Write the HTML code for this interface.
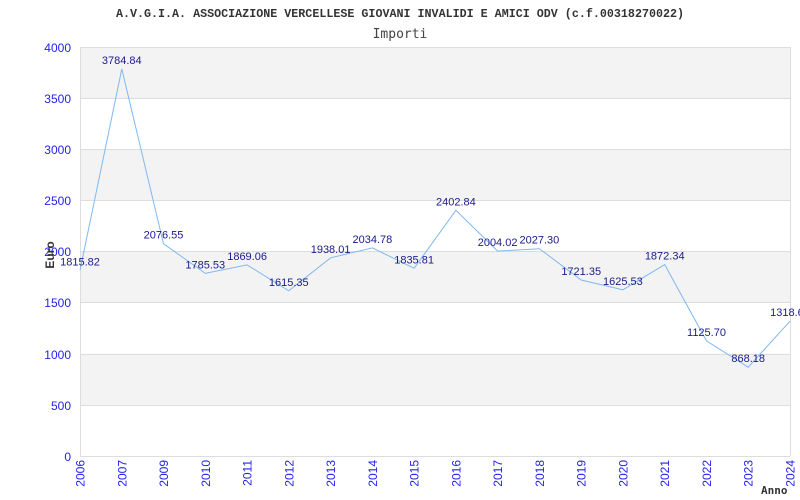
<!DOCTYPE html>
<html><head><meta charset="utf-8"><style>
html,body{margin:0;padding:0;background:#fff;width:800px;height:500px;overflow:hidden}
</style></head><body>
<svg width="800" height="500" xmlns="http://www.w3.org/2000/svg" style="display:block">
<rect x="0" y="0" width="800" height="500" fill="#fff"/>
<text x="400" y="17" text-anchor="middle" font-family="Liberation Mono, monospace" font-weight="bold" font-size="11.7" fill="#333">A.V.G.I.A. ASSOCIAZIONE VERCELLESE GIOVANI INVALIDI E AMICI ODV (c.f.00318270022)</text>
<text x="400" y="38" text-anchor="middle" font-family="DejaVu Sans Mono, monospace" font-size="13" fill="#444">Importi</text>
<g fill="#f3f3f3">
<rect x="80" y="47" width="710" height="51.1"/>
<rect x="80" y="149.3" width="710" height="51.1"/>
<rect x="80" y="251.5" width="710" height="51.1"/>
<rect x="80" y="353.8" width="710" height="51.1"/>
</g>
<g stroke="#dddddd" stroke-width="1">
<line x1="80" y1="47.5" x2="790" y2="47.5"/>
<line x1="80" y1="98.5" x2="790" y2="98.5"/>
<line x1="80" y1="149.5" x2="790" y2="149.5"/>
<line x1="80" y1="200.5" x2="790" y2="200.5"/>
<line x1="80" y1="251.5" x2="790" y2="251.5"/>
<line x1="80" y1="302.5" x2="790" y2="302.5"/>
<line x1="80" y1="354.5" x2="790" y2="354.5"/>
<line x1="80" y1="405.5" x2="790" y2="405.5"/>
<line x1="80" y1="456.5" x2="790" y2="456.5"/>
<line x1="80.5" y1="47" x2="80.5" y2="456"/>
<line x1="790.5" y1="47" x2="790.5" y2="456"/>
</g>
<g font-family="Liberation Sans, sans-serif" font-size="12" fill="#2222ee" text-anchor="end">
<text x="71" y="52">4000</text><text x="71" y="103">3500</text><text x="71" y="154">3000</text><text x="71" y="205">2500</text><text x="71" y="256">2000</text><text x="71" y="307">1500</text><text x="71" y="359">1000</text><text x="71" y="410">500</text><text x="71" y="461">0</text>
</g>
<text transform="translate(54,255) rotate(-90)" text-anchor="middle" font-family="Liberation Sans, sans-serif" font-weight="bold" font-size="12" fill="#333">Euro</text>
<polyline fill="none" stroke="#7fb8f0" stroke-width="1" points="80,270.3 121.8,69 163.5,243.7 205.3,273.4 247.1,264.9 288.8,290.8 330.6,257.8 372.4,247.9 414.1,268.3 455.9,210.3 497.6,251.1 539.4,248.7 581.2,280 622.9,289.8 664.7,264.6 706.5,340.9 748.2,367.2 790,321.2"/>
<g font-family="Liberation Sans, sans-serif" font-size="11" fill="#1a1a8a" text-anchor="middle">
<text x="80" y="265.3">1815.82</text><text x="121.8" y="64">3784.84</text><text x="163.5" y="238.7">2076.55</text><text x="205.3" y="268.4">1785.53</text><text x="247.1" y="259.9">1869.06</text><text x="288.8" y="285.8">1615.35</text><text x="330.6" y="252.8">1938.01</text><text x="372.4" y="242.9">2034.78</text><text x="414.1" y="263.3">1835.81</text><text x="455.9" y="205.3">2402.84</text><text x="497.6" y="246.1">2004.02</text><text x="539.4" y="243.7">2027.30</text><text x="581.2" y="275">1721.35</text><text x="622.9" y="284.8">1625.53</text><text x="664.7" y="259.6">1872.34</text><text x="706.5" y="335.9">1125.70</text><text x="748.2" y="362.2">868.18</text><text x="790" y="316.2">1318.65</text>
</g>
<g font-family="Liberation Sans, sans-serif" font-size="12" fill="#2222ee" text-anchor="end">
<text transform="translate(84.5,460) rotate(-90)">2006</text>
<text transform="translate(126.3,460) rotate(-90)">2007</text>
<text transform="translate(168,460) rotate(-90)">2009</text>
<text transform="translate(209.8,460) rotate(-90)">2010</text>
<text transform="translate(251.6,460) rotate(-90)">2011</text>
<text transform="translate(293.3,460) rotate(-90)">2012</text>
<text transform="translate(335.1,460) rotate(-90)">2013</text>
<text transform="translate(376.9,460) rotate(-90)">2014</text>
<text transform="translate(418.6,460) rotate(-90)">2015</text>
<text transform="translate(460.4,460) rotate(-90)">2016</text>
<text transform="translate(502.1,460) rotate(-90)">2017</text>
<text transform="translate(543.9,460) rotate(-90)">2018</text>
<text transform="translate(585.7,460) rotate(-90)">2019</text>
<text transform="translate(627.4,460) rotate(-90)">2020</text>
<text transform="translate(669.2,460) rotate(-90)">2021</text>
<text transform="translate(711,460) rotate(-90)">2022</text>
<text transform="translate(752.7,460) rotate(-90)">2023</text>
<text transform="translate(794.5,460) rotate(-90)">2024</text>
</g>
<text x="761" y="494" font-family="DejaVu Sans Mono, monospace" font-weight="bold" font-size="11" fill="#333">Anno</text>
</svg>
</body></html>
